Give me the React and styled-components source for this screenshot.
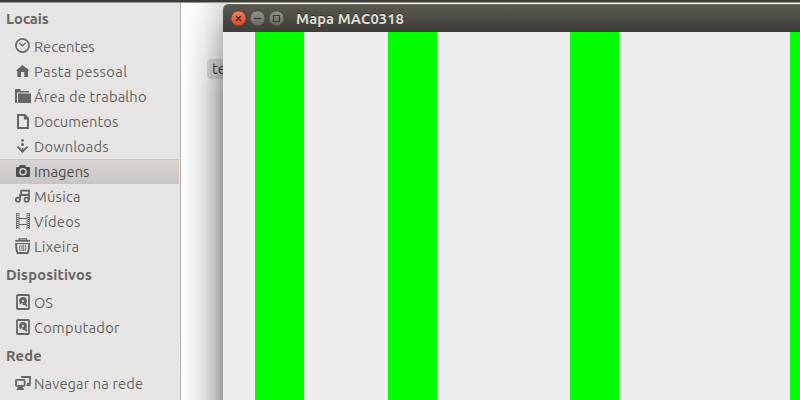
import React from "react";
import styled, { createGlobalStyle } from "styled-components";

const GlobalStyle = createGlobalStyle`
  * { box-sizing: border-box; }
  body { margin: 0; overflow: hidden; font-family: Ubuntu, "Noto Sans", sans-serif; }
`;

const Desktop = styled.div`
  position: relative;
  width: 800px;
  height: 400px;
  overflow: hidden;
  display: flex;
  flex-direction: column;
  background: #fff;
`;

const TopEdge = styled.div`
  flex: none;
  height: 3px;
  background: #3c3b37;
  border-bottom: 1px solid #96948d;
`;

const FileManager = styled.div`
  flex: 1;
  display: flex;
  min-height: 0;
`;

const Sidebar = styled.nav`
  position: relative;
  width: 181px;
  background: #e6e5e3;
  border-right: 1px solid #b5b2ac;
`;

const Section = styled.h2`
  margin: 0;
  height: 31px;
  padding: 0 0 0 6px;
  font-size: 14.67px;
  line-height: 32px;
  font-weight: 700;
  letter-spacing: ${(p) => p.$track}px;
  color: #666663;
`;

const Place = styled.div`
  display: flex;
  align-items: flex-start;
  width: 179px;
  height: 25px;
  padding-left: 15px;
  gap: 3px;
  color: ${(p) => (p.$selected ? "#4c4c4c" : "#666663")};
  background: ${(p) => (p.$selected ? "linear-gradient(#d8d4d1, #c9c5c2)" : "none")};
  box-shadow: ${(p) => (p.$selected ? "inset 0 1px #c8c4c0" : "none")};
`;

const Label = styled.span`
  font-size: 14.67px;
  line-height: 26px;
  white-space: nowrap;
  letter-spacing: ${(p) => p.$track}px;
`;

const Glyph = styled.svg`
  flex: none;
  display: block;
  width: 16px;
  height: 16px;
  margin-top: 4px;
`;

const Grip = styled.div`
  position: absolute;
  left: 179px;
  top: 336px;
  width: 1px;
  height: 32px;
  background: repeating-linear-gradient(#fff 0 1px, transparent 1px 5px);
`;

const Files = styled.main`
  flex: 1;
  padding: 56px 0 0 26px;
`;

const FileName = styled.div`
  width: 60px;
  height: 20px;
  padding-left: 5px;
  border-radius: 4px;
  background: #e4e2e0;
  color: #4c4c4c;
  font-size: 14.67px;
  line-height: 20px;
`;

const Window = styled.section`
  position: absolute;
  left: 223px;
  top: 4px;
  width: 640px;
  height: 460px;
  border-radius: 6px 6px 0 0;
`;

const Shade = styled.div`
  position: absolute;
  left: 181px;
  top: 3px;
  width: 50px;
  height: 397px;
  background: linear-gradient(90deg, rgba(0,0,0,0) 0, rgba(0,0,0,.055) 12px, rgba(0,0,0,.13) 24px, rgba(0,0,0,.25) 34px, rgba(0,0,0,.38) 42px);
  mask-image: linear-gradient(rgba(0,0,0,.32), rgba(0,0,0,.65) 35px, #000 90px);
`;

const TitleBar = styled.header`
  display: flex;
  align-items: flex-start;
  height: 28px;
  padding-left: 7.5px;
  gap: 3px;
  border-radius: 6px 6px 0 0;
  background: linear-gradient(#5b5851, #3e3d39);
  box-shadow: inset 0 1px #69665e;
`;

const WindowButton = styled.svg`
  flex: none;
  width: 16px;
  height: 16px;
  margin-top: 6px;
`;

const Title = styled.h1`
  margin: 0 0 0 8.5px;
  color: #dfdbd2;
  font-size: 14.67px;
  line-height: 30px;
  height: 28px;
  font-weight: 700;
  letter-spacing: ${(p) => p.$track}px;
  text-shadow: 0 -1px #34332f;
`;

const MapView = styled.div`
  display: flex;
  height: 432px;
  padding-left: 32px;
  background: #eee;
`;

const Wall = styled.div`
  flex: none;
  width: 49px;
  margin-right: ${(p) => p.$gap}px;
  background: #0f0;
`;

const icons = {
  clock: (
    <g fill="none" stroke="currentColor">
      <circle cx="7.5" cy="7.5" r="6.6" strokeWidth="1.7" />
      <path d="M4.4 5 L7.4 8 L10.8 4.7" strokeWidth="1.2" />
    </g>
  ),
  home: <path fill="currentColor" d="M7.5 2 L14.7 7.8 H13 V14 H9.3 V9 H6 V14 H2.3 V7.8 H.7Z" />,
  folder: (
    <g fill="currentColor">
      <path d="M0 1 H5.5 V3 H14 V4.5 H2 V15 H0Z" />
      <path d="M3 5.5 H16 V15 H3Z" />
    </g>
  ),
  document: (
    <path fill="currentColor" fillRule="evenodd" d="M2 1 H10.2 L14 5 V16 H2Z M4 3 V14 H12 V6.5 H8.8 V3Z" />
  ),
  download: (
    <g fill="currentColor">
      <circle cx="7.5" cy="2.4" r="1.4" />
      <circle cx="7.5" cy="6.6" r="1.5" />
      <path d="M7.5 12.2 L11.8 7.9 L13.2 9.3 L7.5 15 L1.8 9.3 L3.2 7.9Z" />
      <path d="M6.8 10 H8.2 V13 H6.8Z" />
    </g>
  ),
  camera: (
    <g>
      <path fill="currentColor" d="M5 2 H10 L11 4 H14 Q15 4 15 5 V13 Q15 14 14 14 H2 Q1 14 1 13 V5 Q1 4 2 4 H4Z" />
      <circle cx="8" cy="8.8" r="3.1" fill="none" stroke="#d0ccc9" strokeWidth="1.5" />
    </g>
  ),
  music: (
    <g fill="none" stroke="currentColor" strokeWidth="1.8">
      <circle cx="2.9" cy="11.7" r="2.1" />
      <circle cx="11.6" cy="11.7" r="2.1" />
      <path d="M5.1 12 V7 H14 M6.2 7 V2.7 H14 V12" />
    </g>
  ),
  video: (
    <g fill="none" stroke="currentColor">
      <path d="M1.5 0 V16 M4 0 V16 M12 0 V16 M14.5 0 V16" strokeWidth=".8" />
      <path d="M2.5 0 V16 M13.5 0 V16" strokeWidth="2" strokeDasharray="1 1" />
      <path d="M4 5.5 H12 M4 11.5 H12" />
    </g>
  ),
  trash: (
    <g fill="none" stroke="currentColor">
      <path d="M4 2 V.8 H11.5 V2" strokeWidth="1.2" />
      <path d="M.2 2.8 H15" strokeWidth="1.8" />
      <path d="M.2 5.5 H15" strokeWidth="1" />
      <path d="M1.4 5 Q.6 11 2.6 15 H12.6 Q14.6 11 13.8 5" strokeWidth="1.9" />
      <path d="M5.3 6.6 Q3.7 9.8 5.3 13 M7 6.6 V13 M8.7 6.6 V13 M10.2 6.6 Q11.8 9.8 10.2 13" strokeWidth=".9" />
    </g>
  ),
  disk: (
    <g>
      <rect x="2" y="1" width="12" height="14" rx=".8" fill="none" stroke="currentColor" strokeWidth="1.8" />
      <circle cx="8" cy="7" r="3.9" fill="currentColor" />
      <circle cx="8" cy="7" r="1.1" fill="#e6e5e3" />
      <path d="M7.2 8 L8 13 H5 L6 10Z" fill="#e6e5e3" />
      <path d="M8.8 8.8 L12 12" stroke="currentColor" strokeWidth="2" />
    </g>
  ),
  network: (
    <g fill="none" stroke="currentColor">
      <path d="M7 3 V2 H15 V8.7 H12" strokeWidth="1.8" />
      <path d="M11.5 10.2 H15.5" strokeWidth="1.8" />
      <rect x="1" y="4.8" width="8.6" height="6" rx=".6" strokeWidth="1.8" />
      <path d="M3 11.5 H7.7 L9 15 H1.4Z" fill="currentColor" stroke="none" />
    </g>
  ),
};

const sections = [
  {
    name: "Locais",
    track: 0,
    places: [
      ["clock", "Recentes", 0],
      ["home", "Pasta pessoal", 0.38],
      ["folder", "Área de trabalho", 0.18],
      ["document", "Documentos", 0.04],
      ["download", "Downloads", 0.12],
      ["camera", "Imagens", 0.05],
      ["music", "Música", 0.25],
      ["video", "Vídeos", 0.3],
      ["trash", "Lixeira", 0.35],
    ],
  },
  { name: "Dispositivos", track: 0.18, places: [["disk", "OS", 0], ["disk", "Computador", 0.28]] },
  { name: "Rede", track: 0.2, places: [["network", "Navegar na rede", 0.1]] },
];

const buttonMarks = {
  close: "M5.3 5.3 L10.7 10.7 M10.7 5.3 L5.3 10.7",
  minimize: "M4.5 8 H11.5",
  maximize: "M5 5 H11 V11 H5Z",
};

function ControlButton({ kind }) {
  const close = kind === "close";
  return (
    <WindowButton viewBox="0 0 16 16">
      <defs>
        <linearGradient id={kind} x1="0" y1="0" x2="0" y2="1">
          <stop stopColor={close ? "#f5825b" : "#95928a"} />
          <stop offset="1" stopColor={close ? "#de4719" : "#68665f"} />
        </linearGradient>
      </defs>
      <circle cx="7.5" cy="8.4" r="7.5" fill={`url(#${kind})`} stroke="#373632" strokeWidth=".5" />
      <g transform="translate(-.5 .5)">
        <path d={buttonMarks[kind]} fill="none" stroke={close ? "#482014" : "#3b3a36"} strokeWidth="1.2" />
      </g>
    </WindowButton>
  );
}

export default function App() {
  return (
    <Desktop>
      <GlobalStyle />
      <TopEdge />
      <FileManager>
        <Sidebar>
          {sections.map((section) => (
            <React.Fragment key={section.name}>
              <Section $track={section.track}>{section.name}</Section>
              {section.places.map(([icon, name, track]) => (
                <Place key={name} $selected={name === "Imagens"}>
                  <Glyph viewBox="0 0 16 16">{icons[icon]}</Glyph>
                  <Label $track={track}>{name}</Label>
                </Place>
              ))}
            </React.Fragment>
          ))}
          <Grip />
        </Sidebar>
        <Files>
          <FileName>teste</FileName>
        </Files>
      </FileManager>
      <Shade />
      <Window>
        <TitleBar>
          <ControlButton kind="close" />
          <ControlButton kind="minimize" />
          <ControlButton kind="maximize" />
          <Title $track={0.1}>Mapa MAC0318</Title>
        </TitleBar>
        <MapView>
          <Wall $gap={84} />
          <Wall $gap={133} />
          <Wall $gap={171} />
          <Wall $gap={0} />
        </MapView>
      </Window>
    </Desktop>
  );
}
